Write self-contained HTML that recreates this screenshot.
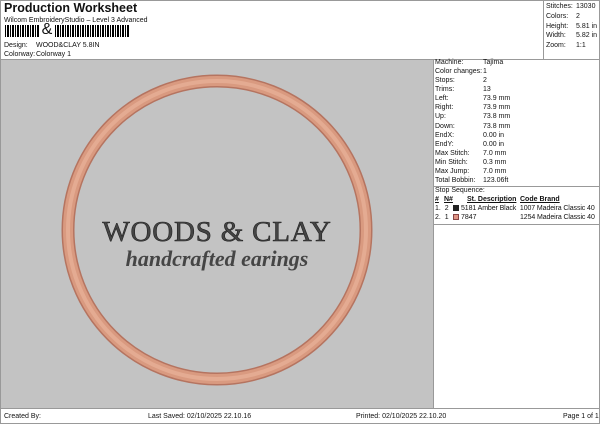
<!DOCTYPE html>
<html><head><style>
*{margin:0;padding:0;box-sizing:border-box}
body{width:600px;height:424px;background:#fff;font-family:"Liberation Sans",sans-serif;color:#111;position:relative;overflow:hidden;font-size:7px}
.a{position:absolute;white-space:nowrap}
.r{font-size:7px;line-height:9.08px}
</style></head><body>
<div class="a" style="left:0;top:0;width:600px;height:424px;border:1px solid #999"></div>
<div class="a" style="left:4px;top:1px;font-size:12.5px;font-weight:bold">Production Worksheet</div>
<div class="a" style="left:4px;top:17px;font-size:7px">Wilcom EmbroideryStudio – Level 3 Advanced</div>
<div class="a" style="left:5px;top:25px;height:12px;width:124px;background:repeating-linear-gradient(90deg,#000 0 1px,#fff 1px 2px,#000 2px 4px,#fff 4px 5px)"></div>
<div class="a" style="left:39px;top:22px;width:16px;height:16px;background:#fff;font-size:16px;line-height:16px;text-align:center">&amp;</div>
<div class="a" style="left:4px;top:42px">Design:</div><div class="a" style="left:36px;top:42px">WOOD&amp;CLAY 5.8IN</div>
<div class="a" style="left:4px;top:51px">Colorway:</div><div class="a" style="left:36px;top:51px">Colorway 1</div>
<div class="a" style="left:543px;top:0;width:57px;height:59px;border-left:1px solid #999"></div>
<div class="a" style="left:546px;top:2px;line-height:9.8px">Stitches:<br>Colors:<br>Height:<br>Width:<br>Zoom:</div>
<div class="a" style="left:576px;top:2px;line-height:9.8px">13030<br>2<br>5.81 in<br>5.82 in<br>1:1</div>
<div class="a" style="left:1px;top:59px;width:598px;border-top:1px solid #999"></div>
<div class="a" style="left:1px;top:60px;width:432px;height:348px;background:#c3c3c3"></div>
<div class="a" style="left:433px;top:60px;height:348px;border-left:1px solid #999"></div>
<svg class="a" style="left:1px;top:60px" width="432" height="348">
<circle cx="216" cy="170" r="149" fill="none" stroke="#b57460" stroke-width="13"/>
<circle cx="216" cy="170" r="149" fill="none" stroke="#d99a80" stroke-width="10"/>
<circle cx="216" cy="170" r="149" fill="none" stroke="#e4ab92" stroke-width="4"/>
<text x="216" y="181" text-anchor="middle" font-family="Liberation Serif,serif" font-size="29" fill="#454545" stroke="#222" stroke-width="0.6" letter-spacing="0.8">WOODS &amp; CLAY</text>
<text x="216" y="206" text-anchor="middle" font-family="Liberation Serif,serif" font-style="italic" font-weight="bold" font-size="22" fill="#454545">handcrafted earings</text>
</svg>
<div class="a r" style="left:435px;top:58px">Machine:<br>Color changes:<br>Stops:<br>Trims:<br>Left:<br>Right:<br>Up:<br>Down:<br>EndX:<br>EndY:<br>Max Stitch:<br>Min Stitch:<br>Max Jump:<br>Total Bobbin:</div>
<div class="a r" style="left:483px;top:58px">Tajima<br>1<br>2<br>13<br>73.9 mm<br>73.9 mm<br>73.8 mm<br>73.8 mm<br>0.00 in<br>0.00 in<br>7.0 mm<br>0.3 mm<br>7.0 mm<br>123.06ft</div>
<div class="a" style="left:433px;top:186px;width:167px;border-top:1px solid #999"></div>
<div class="a r" style="left:435px;top:186px">Stop Sequence:</div>
<div class="a r" style="left:435px;top:195px;font-weight:bold;text-decoration:underline">#</div>
<div class="a r" style="left:444px;top:195px;font-weight:bold;text-decoration:underline">N#</div>
<div class="a r" style="left:467px;top:195px;font-weight:bold;text-decoration:underline">St. Description</div>
<div class="a r" style="left:520px;top:195px;font-weight:bold;text-decoration:underline">Code Brand</div>
<div class="a r" style="left:435px;top:204px">1.&nbsp; 2</div>
<div class="a" style="left:453px;top:205px;width:6px;height:6px;background:#222"></div>
<div class="a r" style="left:461px;top:204px;letter-spacing:-0.1px">5181 Amber Black&nbsp; 1007 Madeira Classic 40</div>
<div class="a r" style="left:435px;top:213px">2.&nbsp; 1</div>
<div class="a" style="left:453px;top:214px;width:6px;height:6px;background:#e09585;border:1px solid #844"></div>
<div class="a r" style="left:461px;top:213px">7847</div>
<div class="a r" style="left:520px;top:213px;letter-spacing:-0.1px">1254 Madeira Classic 40</div>
<div class="a" style="left:433px;top:224px;width:167px;border-top:1px solid #999"></div>
<div class="a" style="left:1px;top:408px;width:598px;border-top:1px solid #999"></div>
<div class="a" style="left:4px;top:413px">Created By:</div>
<div class="a" style="left:148px;top:413px">Last Saved: 02/10/2025 22.10.16</div>
<div class="a" style="left:356px;top:413px">Printed: 02/10/2025 22.10.20</div>
<div class="a" style="left:563px;top:413px">Page 1 of 1</div>
</body></html>
